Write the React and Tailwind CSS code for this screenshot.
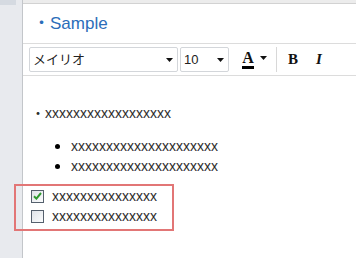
import React from 'react';

const Arrow = () => (
  <svg width="7" height="4" viewBox="0 0 7 4" className="shrink-0">
    <path d="M0 0 H7 L3.5 4 Z" fill="#111" />
  </svg>
);

function CheckBox({ checked }) {
  return (
    <span className="w-[13px] h-[13px] border border-[#55606d] bg-gradient-to-br from-[#dfe3e8] to-[#fbfcfd] flex items-center justify-center shrink-0">
      {checked && (
        <svg width="9" height="8" viewBox="0 0 9 8">
          <path d="M1 4.2 L3.4 6.6 L8 1" fill="none" stroke="#2f9a2f" strokeWidth="2" />
        </svg>
      )}
    </span>
  );
}

export default function App() {
  const xs = (n) => 'x'.repeat(n);
  return (
    <div className="flex w-[356px] h-[258px] bg-[#ececec] overflow-hidden" style={{ fontFamily: '"Liberation Sans", "Noto Sans CJK JP", sans-serif' }}>
      {/* left strip */}
      <div className="w-[23px] shrink-0 bg-[#e8eaee] border-r border-[#c3c6ca]">
        <div className="w-[16px] h-[5px] bg-[#d5dae1]" />
      </div>

      {/* panel */}
      <div className="flex-1 mt-[3px] border-t border-[#d2d2d2] bg-white flex flex-col">
        <div className="h-[40px] flex items-center pl-[10px] border-b border-[#dcdcdc] text-[17px] text-[#2b6db9]">
          ・Sample
        </div>

        {/* toolbar */}
        <div className="h-[32px] flex items-center pl-[6px] border-b border-[#dcdcdc]">
          <div className="w-[149px] h-[25px] border border-[#d3d6da] rounded-[2px] flex items-center justify-between pl-[3px] pr-[4px] text-[13px] text-[#222]">
            <span>メイリオ</span>
            <Arrow />
          </div>
          <div className="ml-[2px] w-[49px] h-[25px] border border-[#d3d6da] rounded-[2px] flex items-center justify-between pl-[3px] pr-[4px] text-[13px] text-[#222]">
            <span>10</span>
            <Arrow />
          </div>
          <div className="ml-[13px] flex flex-col items-center">
            <span className="text-[16px] leading-[14px] font-bold text-[#111]" style={{ fontFamily: '"Liberation Serif", serif' }}>A</span>
            <span className="w-[12px] h-[3px] bg-black mt-[1px]" />
          </div>
          <span className="ml-[6px] mb-[4px]"><Arrow /></span>
          <span className="ml-[9px] w-px h-[25px] bg-[#d8d8d8]" />
          <span className="ml-[11px] text-[15px] font-bold text-[#111]" style={{ fontFamily: '"Liberation Serif", serif' }}>B</span>
          <span className="ml-[18px] text-[15px] font-bold italic text-[#111]" style={{ fontFamily: '"Liberation Serif", serif' }}>I</span>
        </div>

        {/* content */}
        <div className="pl-[8px] pt-[27px] text-[14px] text-[#2e2e2e]">
          <div className="h-[20px] flex items-center">・{xs(18)}</div>

          <div className="mt-[13px] pl-[24px]">
            {[0, 1].map((i) => (
              <div key={i} className="h-[20px] flex items-center">
                <span className="w-[5px] h-[5px] rounded-full bg-black shrink-0" />
                <span className="ml-[11px]">{xs(21)}</span>
              </div>
            ))}
          </div>

          <div className="mt-[8px] -ml-[17px] w-[160px] border-2 border-[#e27676] pl-[15px] pb-[3px]">
            <div className="h-[20px] flex items-center">
              <CheckBox checked />
              <span className="ml-[8px]">{xs(15)}</span>
            </div>
            <div className="h-[20px] flex items-center">
              <CheckBox />
              <span className="ml-[8px]">{xs(15)}</span>
            </div>
          </div>
        </div>
      </div>
    </div>
  );
}
